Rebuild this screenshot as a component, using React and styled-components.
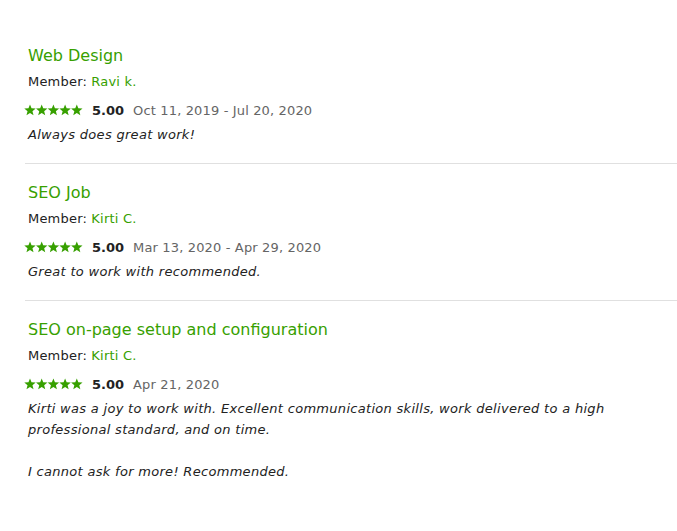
import React from "react";
import styled, { createGlobalStyle } from "styled-components";

const Global = createGlobalStyle`
  html, body { margin: 0; padding: 0; background: #fff; }
  body { font-family: "DejaVu Sans", "Liberation Sans", sans-serif; color: #222; }
`;

const List = styled.div`
  padding: 27px 0 0 25px;
`;

const Item = styled.section`
  padding: 18px 0 ${(p) => (p.$last ? "0" : "18px")} 0;
  border-bottom: ${(p) => (p.$last ? "none" : "1px solid #e0e0e0")};
`;

const Title = styled.h4`
  margin: 0 0 5px 3px;
  font-size: 16px;
  line-height: 22px;
  font-weight: 500;
  color: #37a000;
`;

const Member = styled.div`
  margin: 0 0 8px 3px;
  font-size: 13px;
  line-height: 20px;
  letter-spacing: 0.2px;
  color: #222;
`;

const Name = styled.span`
  color: #37a000;
`;

const RatingRow = styled.div`
  display: flex;
  align-items: center;
  gap: 9px;
  margin-left: -1px;
  height: 20px;
  margin-bottom: 4px;
`;

const Score = styled.span`
  font-size: 13px;
  font-weight: bold;
  color: #222;
`;

const Dates = styled.span`
  font-size: 13px;
  letter-spacing: 0.15px;
  color: #656565;
`;

const Feedback = styled.p`
  margin: 0 0 0 3px;
  max-width: 610px;
  font-size: 13px;
  line-height: 21px;
  letter-spacing: 0.3px;
  font-style: italic;
  color: #222;
  white-space: pre-line;
`;

const StarSvg = styled.svg`
  display: block;
  flex: none;
`;

const starPoints = (cx) => {
  const pts = [];
  for (let i = 0; i < 10; i++) {
    const r = i % 2 === 0 ? 6 : 2.6;
    const a = -Math.PI / 2 + (i * Math.PI) / 5;
    pts.push(`${(cx + r * Math.cos(a)).toFixed(2)},${(6.4 + r * Math.sin(a)).toFixed(2)}`);
  }
  return pts.join(" ");
};

const Stars = () => (
  <StarSvg width="59" height="12" viewBox="0 0 59 12">
    {[0, 1, 2, 3, 4].map((i) => (
      <polygon key={i} points={starPoints(6 + i * 11.7)} fill="#37a000" />
    ))}
  </StarSvg>
);

const reviews = [
  {
    title: "Web Design",
    member: "Ravi k.",
    score: "5.00",
    dates: "Oct 11, 2019 - Jul 20, 2020",
    text: "Always does great work!",
  },
  {
    title: "SEO Job",
    member: "Kirti C.",
    score: "5.00",
    dates: "Mar 13, 2020 - Apr 29, 2020",
    text: "Great to work with recommended.",
  },
  {
    title: "SEO on-page setup and configuration",
    member: "Kirti C.",
    score: "5.00",
    dates: "Apr 21, 2020",
    text:
      "Kirti was a joy to work with. Excellent communication skills, work delivered to a high professional standard, and on time.\n\nI cannot ask for more! Recommended.",
  },
];

export default function App() {
  return (
    <>
      <Global />
      <List>
        {reviews.map((r, i) => (
          <Item key={i} $last={i === reviews.length - 1}>
            <Title>{r.title}</Title>
            <Member>
              Member: <Name>{r.member}</Name>
            </Member>
            <RatingRow>
              <Stars />
              <Score>{r.score}</Score>
              <Dates>{r.dates}</Dates>
            </RatingRow>
            <Feedback>{r.text}</Feedback>
          </Item>
        ))}
      </List>
    </>
  );
}
